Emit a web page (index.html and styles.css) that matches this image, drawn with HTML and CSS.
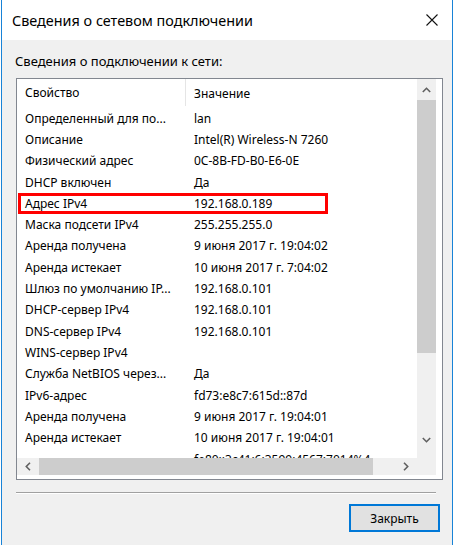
FILE: index.html
```html
<!DOCTYPE html>
<html lang="ru">
<head>
<meta charset="utf-8">
<title>Сведения о сетевом подключении</title>
<link rel="stylesheet" href="styles.css">
</head>
<body>
<div class="window">
  <div class="titlebar">
    <span class="title">Сведения о сетевом подключении</span>
    <svg class="close" width="12" height="12" viewBox="0 0 12 12"><path d="M0.5 0.5L11.5 11.5M11.5 0.5L0.5 11.5" stroke="#111" stroke-width="1.1" fill="none"/></svg>
  </div>
  <div class="content">
    <div class="label">Сведения о подключении к сети:</div>
    <div class="list">
      <div class="view">
        <div class="header"><div class="hcell c1">Свойство</div><div class="hcell c2">Значение</div></div>
        <div class="row"><div class="c1">Определенный для по...</div><div class="c2">lan</div></div>
        <div class="row"><div class="c1">Описание</div><div class="c2">Intel(R) Wireless-N 7260</div></div>
        <div class="row"><div class="c1">Физический адрес</div><div class="c2">0C-8B-FD-B0-E6-0E</div></div>
        <div class="row"><div class="c1">DHCP включен</div><div class="c2">Да</div></div>
        <div class="row marked"><div class="c1">Адрес IPv4</div><div class="c2">192.168.0.189</div><div class="highlight"></div></div>
        <div class="row"><div class="c1">Маска подсети IPv4</div><div class="c2">255.255.255.0</div></div>
        <div class="row"><div class="c1">Аренда получена</div><div class="c2">9 июня 2017 г. 19:04:02</div></div>
        <div class="row"><div class="c1">Аренда истекает</div><div class="c2">10 июня 2017 г. 7:04:02</div></div>
        <div class="row"><div class="c1">Шлюз по умолчанию IP...</div><div class="c2">192.168.0.101</div></div>
        <div class="row"><div class="c1">DHCP-сервер IPv4</div><div class="c2">192.168.0.101</div></div>
        <div class="row"><div class="c1">DNS-сервер IPv4</div><div class="c2">192.168.0.101</div></div>
        <div class="row"><div class="c1">WINS-сервер IPv4</div><div class="c2"></div></div>
        <div class="row"><div class="c1">Служба NetBIOS через...</div><div class="c2">Да</div></div>
        <div class="row"><div class="c1">IPv6-адрес</div><div class="c2">fd73:e8c7:615d::87d</div></div>
        <div class="row"><div class="c1">Аренда получена</div><div class="c2">9 июня 2017 г. 19:04:01</div></div>
        <div class="row"><div class="c1">Аренда истекает</div><div class="c2">10 июня 2017 г. 19:04:01</div></div>
        <div class="row partial"><div class="c1"></div><div class="c2">fe80::3c41:6:3599:4567:7014%4</div></div>
      </div>
      <div class="vscroll">
        <div class="sbtn"><svg width="9" height="6" viewBox="0 0 9 6"><path d="M0.8 5L4.5 1.3L8.2 5" stroke="#606060" stroke-width="1.6" fill="none"/></svg></div>
        <div class="vthumb"></div>
        <div class="vtrack"></div>
        <div class="sbtn down"><svg width="9" height="6" viewBox="0 0 9 6"><path d="M0.8 1L4.5 4.7L8.2 1" stroke="#606060" stroke-width="1.6" fill="none"/></svg></div>
      </div>
      <div class="hscroll">
        <div class="hbtn"><svg width="6" height="9" viewBox="0 0 6 9"><path d="M5 0.8L1.3 4.5L5 8.2" stroke="#606060" stroke-width="1.6" fill="none"/></svg></div>
        <div class="hthumb"></div>
        <div class="htrack"></div>
        <div class="hbtn"><svg width="6" height="9" viewBox="0 0 6 9"><path d="M1 0.8L4.7 4.5L1 8.2" stroke="#606060" stroke-width="1.6" fill="none"/></svg></div>
      </div>
      <div class="corner"></div>
    </div>
    <div class="sep"></div>
    <div class="footer"><button class="btn">Закрыть</button></div>
  </div>
</div>
</body>
</html>
```

FILE: styles.css
```css
html, body {
  margin: 0;
  padding: 0;
  background: #ffffff;
}
body {
  font-family: "Noto Sans", "Liberation Sans", sans-serif;
  font-size: 12px;
  color: #000;
}
.window {
  margin-left: 1px;
  width: 450px;
  height: 545px;
  border-left: 1px solid #1883d7;
  border-right: 1px solid #1883d7;
  display: flex;
  flex-direction: column;
  background: #f0f0f0;
}
.titlebar {
  height: 40px;
  flex: none;
  background: #ffffff;
  display: flex;
  align-items: center;
  justify-content: space-between;
  padding: 0 14px 0 10px;
}
.title {
  font-size: 14.4px;
  color: #000;
}
.close {
  display: block;
}
.content {
  flex: 1;
  display: flex;
  flex-direction: column;
  padding: 13px 12px 0 13px;
}
.label {
  font-size: 13px;
  line-height: 16px;
  height: 16px;
}
.list {
  margin-top: 9px;
  margin-left: 1px;
  width: 422px;
  height: 398px;
  border: 1px solid #828790;
  background: #ffffff;
  display: grid;
  grid-template-columns: 400px 19px;
  grid-template-rows: 379px 17px;
  padding: 0 3px 2px 0;
  overflow: hidden;
}
.view {
  grid-column: 1;
  grid-row: 1;
  overflow: hidden;
  background: #fff;
}
.header {
  display: flex;
  height: 28.5px;
  align-items: stretch;
}
.hcell {
  display: flex;
  align-items: center;
}
.header .c1 {
  border-right: 1px solid #e5e5e5;
  height: 27px;
}
.row {
  display: flex;
  height: 21.3px;
  align-items: center;
  position: relative;
}
.row.partial {
  align-items: flex-start;
  padding-top: 3px;
}
.c1 {
  width: 160px;
  padding-left: 8px;
  white-space: nowrap;
  overflow: hidden;
  flex: none;
}
.c2 {
  padding-left: 8px;
  white-space: nowrap;
}
.row .c1 {
  width: 161px;
}
.highlight {
  position: absolute;
  left: 1px;
  top: 0;
  width: 304px;
  height: 15px;
  border: 3px solid #ff0000;
}
.vscroll {
  grid-column: 2;
  grid-row: 1;
  display: flex;
  flex-direction: column;
  background: #f0f0f0;
}
.sbtn {
  height: 21px;
  flex: none;
  display: flex;
  align-items: center;
  justify-content: center;
}
.sbtn.down {
  height: 25px;
  align-items: flex-start;
  padding-top: 4px;
  box-sizing: border-box;
}
.vthumb {
  height: 253px;
  flex: none;
  background: #cdcdcd;
}
.vtrack {
  flex: 1;
}
.hscroll {
  grid-column: 1;
  grid-row: 2;
  display: flex;
  background: #f0f0f0;
}
.hbtn {
  width: 22px;
  flex: none;
  display: flex;
  align-items: center;
  justify-content: center;
}
.hthumb {
  width: 334px;
  flex: none;
  background: #cdcdcd;
}
.htrack {
  flex: 1;
}
.corner {
  grid-column: 2;
  grid-row: 2;
  background: #f0f0f0;
}
.sep {
  margin-top: 12px;
  margin-left: 1px;
  width: 420px;
  height: 1px;
  background: #a0a0a0;
  border-bottom: 1px solid #ffffff;
}
.footer {
  display: flex;
  justify-content: flex-end;
  padding-top: 10px;
}
.btn {
  width: 91px;
  height: 28px;
  border: 2px solid #0078d7;
  background: #e1e1e1;
  font-family: inherit;
  font-size: 12px;
  color: #000;
  padding: 0;
}
```
